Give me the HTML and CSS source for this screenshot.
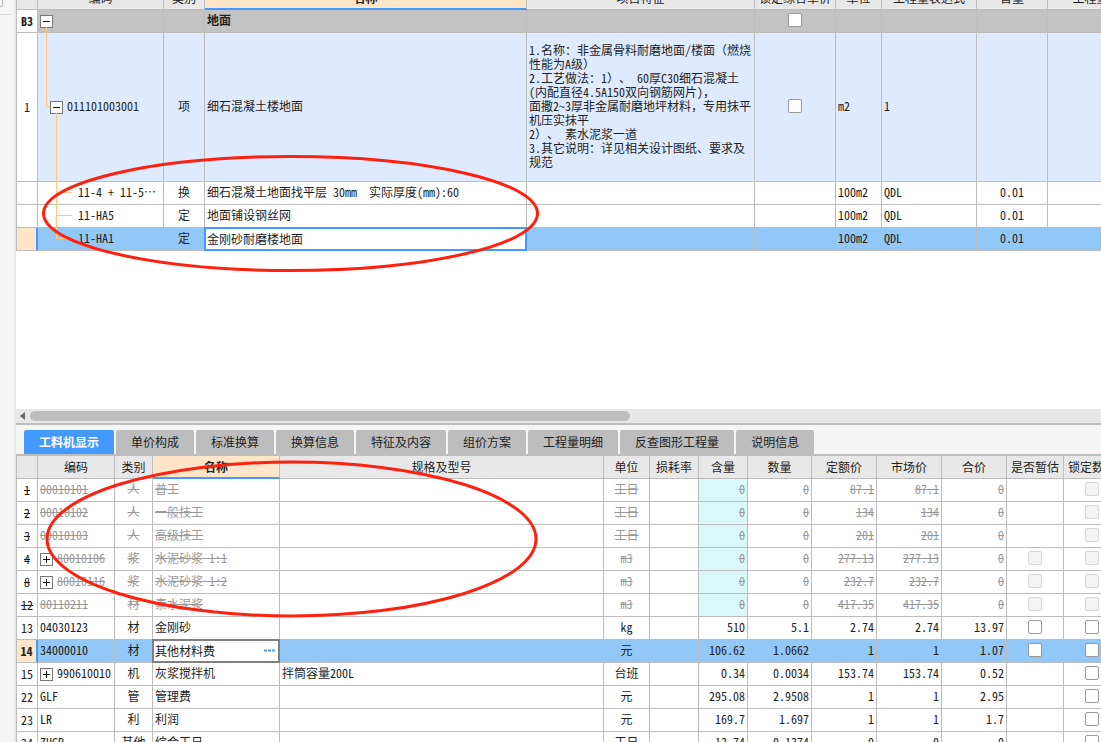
FILE: index.html
```html
<!DOCTYPE html>
<html lang="zh-CN">
<head>
<meta charset="utf-8">
<title>工料机显示</title>
<link rel="stylesheet" href="styles.css">
</head>
<body>
<aside class="rail"><div class="rail-head"></div></aside>
<main class="main">
<section class="pane-top">
<table class="grid grid-top">
<colgroup><col class="w22"><col class="w126"><col class="w41"><col class="w322"><col class="w228"><col class="w81"><col class="w46"><col class="w95"><col class="w71"><col class="w86"></colgroup>
<thead><tr><th></th><th>编码</th><th>类别</th><th class="active">名称</th><th>项目特征</th><th>锁定综合单价</th><th>单位</th><th>工程量表达式</th><th>含量</th><th>工程量</th></tr></thead>
<tbody>
<tr class="group"><td class="num">B3</td><td><button class="exp" aria-label="折叠"><svg viewBox="0 0 11 11"><path d="M2 5.5h7"/></svg></button></td><td></td><td>地面</td><td></td><td class="c"><input type="checkbox" aria-label="锁定综合单价"></td><td></td><td></td><td></td><td></td></tr>
<tr class="item"><td class="num">1</td><td class="lv1"><button class="exp" aria-label="折叠"><svg viewBox="0 0 11 11"><path d="M2 5.5h7"/></svg></button>011101003001</td><td class="c">项</td><td>细石混凝土楼地面</td><td class="desc">1.名称：非金属骨料耐磨地面/楼面（燃烧<br>性能为A级）<br>2.工艺做法：1）、 60厚C30细石混凝土<br>(内配直径4.5A150双向钢筋网片)，<br>面撒2~3厚非金属耐磨地坪材料，专用抹平<br>机压实抹平<br>2）、 素水泥浆一道<br>3.其它说明：详见相关设计图纸、要求及<br>规范</td><td class="c"><input type="checkbox" aria-label="锁定综合单价"></td><td>m2</td><td>1</td><td></td><td></td></tr>
<tr><td class="num"></td><td class="lv2">11-4 + 11-5…</td><td class="c">换</td><td>细石混凝土地面找平层 30mm&nbsp; 实际厚度(mm):60</td><td></td><td></td><td>100m2</td><td>QDL</td><td class="c">0.01</td><td></td></tr>
<tr><td class="num"></td><td class="lv2">11-HA5</td><td class="c">定</td><td>地面铺设钢丝网</td><td></td><td></td><td>100m2</td><td>QDL</td><td class="c">0.01</td><td></td></tr>
<tr class="sel"><td class="num"></td><td class="lv2">11-HA1</td><td class="c">定</td><td class="edit edit-blue"><input type="text" aria-label="名称" value="金刚砂耐磨楼地面"></td><td></td><td></td><td>100m2</td><td>QDL</td><td class="c">0.01</td><td></td></tr>
</tbody>
</table>
<svg class="tree" width="60" height="240" viewBox="0 0 60 240"><path d="M30.5 27v79.5H34M40.5 113v125.5H56M40.5 192.5H56M40.5 215.5H56" /></svg>
</section>
<div class="scroll"><svg class="arrow" viewBox="0 0 5 8"><path d="M5 0v8L0 4z"/></svg><div class="track"><div class="thumb"></div></div></div>
<section class="pane-bottom">
<nav class="tabs">
<button class="tab on">工料机显示</button><button class="tab">单价构成</button><button class="tab">标准换算</button><button class="tab">换算信息</button><button class="tab">特征及内容</button><button class="tab">组价方案</button><button class="tab">工程量明细</button><button class="tab">反查图形工程量</button><button class="tab">说明信息</button>
</nav>
<table class="grid grid-bottom">
<colgroup><col class="w22"><col class="w77"><col class="w38"><col class="w127"><col class="w324"><col class="w46"><col class="w49"><col class="w49"><col class="w64"><col class="w65"><col class="w65"><col class="w65"><col class="w57"><col class="w57"></colgroup>
<thead><tr><th></th><th>编码</th><th>类别</th><th class="active">名称</th><th>规格及型号</th><th>单位</th><th>损耗率</th><th>含量</th><th>数量</th><th>定额价</th><th>市场价</th><th>合价</th><th>是否暂估</th><th>锁定数量</th></tr></thead>
<tbody>
<tr class="del"><td class="num">1</td><td>00010101</td><td class="c">人</td><td>普工</td><td></td><td class="c">工日</td><td></td><td class="r cyan">0</td><td class="r">0</td><td class="r">87.1</td><td class="r">87.1</td><td class="r">0</td><td></td><td class="c"><input type="checkbox" disabled aria-label="锁定数量"></td></tr>
<tr class="del"><td class="num">2</td><td>00010102</td><td class="c">人</td><td>一般技工</td><td></td><td class="c">工日</td><td></td><td class="r cyan">0</td><td class="r">0</td><td class="r">134</td><td class="r">134</td><td class="r">0</td><td></td><td class="c"><input type="checkbox" disabled aria-label="锁定数量"></td></tr>
<tr class="del"><td class="num">3</td><td>00010103</td><td class="c">人</td><td>高级技工</td><td></td><td class="c">工日</td><td></td><td class="r cyan">0</td><td class="r">0</td><td class="r">201</td><td class="r">201</td><td class="r">0</td><td></td><td class="c"><input type="checkbox" disabled aria-label="锁定数量"></td></tr>
<tr class="del"><td class="num">4</td><td><button class="exp" aria-label="展开"><svg viewBox="0 0 11 11"><path d="M2 5.5h7M5.5 2v7"/></svg></button>80010106</td><td class="c">浆</td><td>水泥砂浆 1:1</td><td></td><td class="c">m3</td><td></td><td class="r cyan">0</td><td class="r">0</td><td class="r">277.13</td><td class="r">277.13</td><td class="r">0</td><td class="c"><input type="checkbox" disabled aria-label="是否暂估"></td><td class="c"><input type="checkbox" disabled aria-label="锁定数量"></td></tr>
<tr class="del"><td class="num">8</td><td><button class="exp" aria-label="展开"><svg viewBox="0 0 11 11"><path d="M2 5.5h7M5.5 2v7"/></svg></button>80010116</td><td class="c">浆</td><td>水泥砂浆 1:2</td><td></td><td class="c">m3</td><td></td><td class="r cyan">0</td><td class="r">0</td><td class="r">232.7</td><td class="r">232.7</td><td class="r">0</td><td class="c"><input type="checkbox" disabled aria-label="是否暂估"></td><td class="c"><input type="checkbox" disabled aria-label="锁定数量"></td></tr>
<tr class="del"><td class="num">12</td><td>80110211</td><td class="c">材</td><td>素水泥浆</td><td></td><td class="c">m3</td><td></td><td class="r cyan">0</td><td class="r">0</td><td class="r">417.35</td><td class="r">417.35</td><td class="r">0</td><td class="c"><input type="checkbox" disabled aria-label="是否暂估"></td><td class="c"><input type="checkbox" disabled aria-label="锁定数量"></td></tr>
<tr><td class="num">13</td><td>04030123</td><td class="c">材</td><td>金刚砂</td><td></td><td class="c">kg</td><td></td><td class="r">510</td><td class="r">5.1</td><td class="r">2.74</td><td class="r">2.74</td><td class="r">13.97</td><td class="c"><input type="checkbox" aria-label="是否暂估"></td><td class="c"><input type="checkbox" aria-label="锁定数量"></td></tr>
<tr class="sel"><td class="num">14</td><td>34000010</td><td class="c">材</td><td class="edit edit-gray"><input type="text" aria-label="名称" value="其他材料费"><button class="more" aria-label="更多"><svg viewBox="0 0 11 3"><path d="M0 .5h3v2H0zM4 .5h3v2H4zM8 .5h3v2H8z"/></svg></button></td><td></td><td class="c">元</td><td></td><td class="r">106.62</td><td class="r">1.0662</td><td class="r">1</td><td class="r">1</td><td class="r">1.07</td><td class="c"><input type="checkbox" aria-label="是否暂估"></td><td class="c"><input type="checkbox" aria-label="锁定数量"></td></tr>
<tr><td class="num">15</td><td><button class="exp" aria-label="展开"><svg viewBox="0 0 11 11"><path d="M2 5.5h7M5.5 2v7"/></svg></button>990610010</td><td class="c">机</td><td>灰浆搅拌机</td><td>拌筒容量200L</td><td class="c">台班</td><td></td><td class="r">0.34</td><td class="r">0.0034</td><td class="r">153.74</td><td class="r">153.74</td><td class="r">0.52</td><td></td><td class="c"><input type="checkbox" aria-label="锁定数量"></td></tr>
<tr><td class="num">22</td><td>GLF</td><td class="c">管</td><td>管理费</td><td></td><td class="c">元</td><td></td><td class="r">295.08</td><td class="r">2.9508</td><td class="r">1</td><td class="r">1</td><td class="r">2.95</td><td></td><td class="c"><input type="checkbox" aria-label="锁定数量"></td></tr>
<tr><td class="num">23</td><td>LR</td><td class="c">利</td><td>利润</td><td></td><td class="c">元</td><td></td><td class="r">169.7</td><td class="r">1.697</td><td class="r">1</td><td class="r">1</td><td class="r">1.7</td><td></td><td class="c"><input type="checkbox" aria-label="锁定数量"></td></tr>
<tr><td class="num">24</td><td>ZHGR</td><td class="c">其他</td><td>综合工日</td><td></td><td class="c">工日</td><td></td><td class="r">13.74</td><td class="r">0.1374</td><td class="r">0</td><td class="r">0</td><td class="r">0</td><td></td><td class="c"><input type="checkbox" aria-label="锁定数量"></td></tr>
</tbody>
</table>
</section>
</main>
<svg class="marks" width="600" height="640" viewBox="0 0 600 640"><ellipse cx="290.5" cy="213.5" rx="247" ry="57"/><ellipse cx="291.5" cy="539" rx="244.5" ry="77"/></svg>
</body>
</html>
```

FILE: styles.css
```css
* { box-sizing: border-box; }
body {
  margin: 0;
  height: 100vh;
  display: flex;
  position: relative;
  overflow: hidden;
  background: #fff;
  color: #1e1e1e;
  font: 12px/14px "Noto Sans Mono CJK SC", "Liberation Mono", "Noto Sans CJK SC", monospace;
  text-spacing-trim: space-all;
}
button, input { font: inherit; color: inherit; margin: 0; padding: 0; }
.rail { flex: 0 0 16px; background: #f5f5f5; border-right: 2px solid #e8e8e8; }
.rail-head { width: 12px; height: 15px; border-bottom: 1px solid #dcdcdc; }
.rail-head::before {
  content: "";
  display: block;
  width: 2px;
  height: 6px;
  border: solid #b8b8b8;
  border-width: 0 1px 1px 0;
  border-radius: 0 0 2px 0;
}
.main { flex: 1; min-width: 0; display: flex; flex-direction: column; }
.pane-top { flex: 1; min-height: 0; overflow: hidden; position: relative; }
.pane-bottom { flex: 0 0 317px; overflow: hidden; background: #fff; }

.grid { table-layout: fixed; border-collapse: separate; border-spacing: 0; }
.grid-top { width: 1118px; margin-top: -13px; }
.grid-bottom { width: 1105px; }
.w22 { width: 22px; } .w38 { width: 38px; } .w41 { width: 41px; } .w46 { width: 46px; }
.w49 { width: 49px; } .w57 { width: 57px; } .w64 { width: 64px; } .w65 { width: 65px; }
.w71 { width: 71px; } .w77 { width: 77px; } .w81 { width: 81px; } .w86 { width: 86px; }
.w95 { width: 95px; } .w126 { width: 126px; } .w127 { width: 127px; } .w228 { width: 228px; }
.w322 { width: 322px; } .w324 { width: 324px; }
.grid th, .grid td {
  height: 23px;
  padding: 0 2px 2px;
  border: solid #bdbdbd;
  border-width: 0 1px 1px 0;
  white-space: nowrap;
  overflow: hidden;
  text-align: left;
  vertical-align: middle;
}
.grid tr > :first-child { border-left-width: 1px; }
.grid th { background: #e8e8e8; font-weight: 400; text-align: center; padding: 0; }
.grid th.active { background: #ffe6c8; font-weight: 700; border-bottom: 2px solid #4499ff; }
.grid td.num { text-align: center; padding: 0; background: #fff; }
.grid td.c { text-align: center; padding: 0 0 2px; }
.grid td:has(input) { padding-bottom: 0; }
.grid td.r { text-align: right; }
.grid td.lv1 { padding-left: 12px; }
.grid td.lv2 { padding-left: 40px; }
.group td { background: #c3c3c3; font-weight: 700; }
.item td { background: #deebff; height: 149px; }
.sel td { background: #92c8f7; }
.grid .sel td.num { background: #ffe6c8; font-weight: 700; border-right: 2px solid #4499ff; }
.del { color: #999; }
.del td { text-decoration: line-through; }
.del td.num { color: #1e1e1e; }
.grid td.cyan { background: #daf8f8; }

.exp {
  display: inline-block;
  width: 13px;
  height: 13px;
  margin-right: 4px;
  border: 1px solid #777;
  background: #fff;
  vertical-align: -2px;
}
.exp svg { display: block; width: 11px; height: 11px; fill: none; stroke: #111; }
input[type="checkbox"] {
  appearance: none;
  display: block;
  width: 14px;
  height: 14px;
  margin: 0 auto;
  border: 1px solid #999;
  border-radius: 2px;
  background: #fff;
}
input[type="checkbox"]:disabled { border-color: #d8d8d8; background: #f3f3f3; }
.grid td.edit { position: relative; background: #fff; overflow: visible; }
.edit::after { content: ""; position: absolute; inset: -1px; border: 2px solid #4499ff; pointer-events: none; }
.edit-gray::after { border-color: #808080; }
.edit input { display: block; width: 100%; height: 20px; padding-bottom: 2px; border: 0; outline: 0; background: none; }
.more { position: absolute; right: 4px; top: 4px; width: 11px; height: 12px; border: 0; background: none; }
.more svg { display: block; width: 11px; height: 3px; fill: #5a9bd5; }
.tree { position: absolute; left: 0; top: 0; fill: none; stroke: #ffc87d; }

.scroll { flex: 0 0 16px; display: flex; align-items: center; padding-left: 4px; background: #e8e8e8; border-bottom: 2px solid #bdbdbd; }
.arrow { width: 5px; height: 8px; fill: #666; margin-right: 5px; }
.track { flex: 1; }
.thumb { width: 56%; height: 10px; border-radius: 5px; background: #bdbdbd; }

.tabs { display: flex; gap: 2px; height: 31px; padding: 5px 8px 0; background: #f5f5f5; border-bottom: 2px solid #bdbdbd; }
.tab {
  padding: 0 15px;
  border: 0;
  border-radius: 2px 2px 0 0;
  background: #bdbdbd;
  font-family: "Noto Sans CJK SC", sans-serif;
  white-space: nowrap;
}
.tab.on { background: #4499ff; color: #fff; font-weight: 700; }
.marks { position: absolute; left: 0; top: 0; fill: none; stroke: #ff2010; stroke-width: 3; pointer-events: none; }
```
